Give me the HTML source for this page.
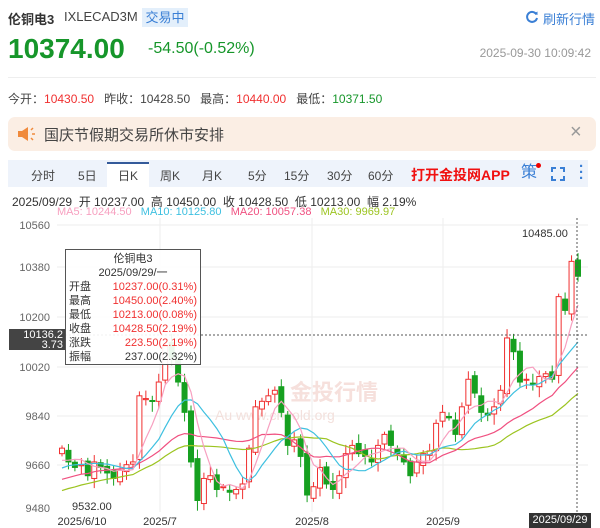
<!DOCTYPE html>
<html><head><meta charset="utf-8">
<style>
*{margin:0;padding:0;box-sizing:border-box}
body{width:600px;height:528px;overflow:hidden;background:#fff;font-family:"Liberation Sans","Noto Sans CJK SC",sans-serif;position:relative;color:#333}
.a{position:absolute;white-space:nowrap}
</style></head><body>
<div class="a" style="left:8px;top:9px;font-size:13px;font-weight:bold;color:#333">伦铜电3</div>
<div class="a" style="left:64px;top:9px;font-size:13px;color:#444">IXLECAD3M</div>
<div class="a" style="left:142px;top:8px;width:46px;height:19px;background:#e3effb;color:#3a7fd5;font-size:13px;line-height:19px;text-align:center">交易中</div>
<svg class="a" style="left:525px;top:10px" width="14" height="14" viewBox="0 0 14 14"><path d="M11.5 4.5A5 5 0 1 0 12 8" fill="none" stroke="#3a7fd5" stroke-width="2"/><path d="M9 3.5L12.5 5 12.5 1.5z" fill="#3a7fd5"/></svg>
<div class="a" style="left:543px;top:9px;font-size:13px;color:#3a7fd5">刷新行情</div>
<div class="a" style="left:8px;top:33px;font-size:28px;font-weight:bold;color:#16962a">10374.00</div>
<div class="a" style="left:148px;top:40px;font-size:16px;color:#16962a">-54.50(-0.52%)</div>
<div class="a" style="right:9px;top:46px;font-size:12px;color:#999">2025-09-30 10:09:42</div>
<div class="a" style="left:8px;top:77px;width:588px;height:1px;background:#eee"></div>
<div class="a" style="left:8px;top:90px;font-size:12px;color:#444">今开：<span style="color:#f03030">10430.50</span>&nbsp;&nbsp;&nbsp;昨收：10428.50&nbsp;&nbsp;&nbsp;最高：<span style="color:#f03030">10440.00</span>&nbsp;&nbsp;&nbsp;最低：<span style="color:#16962a">10371.50</span></div>
<div class="a" style="left:8px;top:117px;width:588px;height:34px;background:#fbeee4;border-radius:7px"></div>
<svg class="a" style="left:16px;top:125px" width="20" height="18" viewBox="0 0 20 18"><path d="M2 6h4l6-4v14l-6-4H2z" fill="#f08a3c"/><path d="M15 5l2-2M16 9h3M15 13l2 2" stroke="#f08a3c" stroke-width="1.5"/></svg>
<div class="a" style="left:44px;top:124px;font-size:15px;color:#444">国庆节假期交易所休市安排</div>
<div class="a" style="left:570px;top:121px;font-size:20px;color:#999">×</div>
<div class="a" style="left:8px;top:160px;width:580px;height:27px;background:#eef3fb"></div>
<div class="a" style="left:107px;top:162px;width:42px;height:26px;background:#fff;border-top:2px solid #345a9a"></div>
<div class="a" style="left:0;top:167px;font-size:12px;color:#444;width:400px">
<span class="a" style="left:31px">分时</span><span class="a" style="left:78px">5日</span><span class="a" style="left:118px">日K</span><span class="a" style="left:160px">周K</span><span class="a" style="left:202px">月K</span><span class="a" style="left:248px">5分</span><span class="a" style="left:284px">15分</span><span class="a" style="left:327px">30分</span><span class="a" style="left:368px">60分</span></div>
<div class="a" style="left:411px;top:165px;font-size:14px;font-weight:bold;color:#f01010">打开金投网APP</div>
<div class="a" style="left:521px;top:164px;font-size:16px;line-height:18px;color:#3a7fd5">策</div>
<div class="a" style="left:536px;top:163px;width:5px;height:5px;border-radius:50%;background:#e00"></div>
<svg class="a" style="left:551px;top:167px" width="14" height="14" viewBox="0 0 14 14"><path d="M1 5V1h4M9 1h4v4M13 9v4H9M5 13H1V9" fill="none" stroke="#3a7fd5" stroke-width="2"/></svg>
<div class="a" style="left:579px;top:164px;font-size:15px;color:#3a7fd5;line-height:6px;font-weight:bold">·<br>·<br>·</div>
<div class="a" style="left:12px;top:193px;font-size:12px;color:#333">2025/09/29&nbsp; 开 10237.00&nbsp; 高 10450.00&nbsp; 收 10428.50&nbsp; 低 10213.00&nbsp; 幅 2.19%</div>
<div class="a" style="left:57px;top:206px;font-size:11px"><span style="color:#f7a0c0">MA5: 10244.50</span>&nbsp;&nbsp;&nbsp;<span style="color:#3ec0e0">MA10: 10125.80</span>&nbsp;&nbsp;&nbsp;<span style="color:#f05080">MA20: 10057.38</span>&nbsp;&nbsp;&nbsp;<span style="color:#9cc420">MA30: 9969.97</span></div>
<svg id="ch" class="a" style="left:0;top:0" width="600" height="528"></svg>
<div class="a" style="left:65px;top:249px;width:136px;height:116px;border:1px solid #555;background:rgba(255,255,255,.92);font-size:11px;line-height:14px;padding:2px 3px">
<div style="text-align:center">伦铜电3</div><div style="text-align:center">2025/09/29/一</div>
<div>开盘<span style="float:right;color:#f03030">10237.00(0.31%)</span></div>
<div>最高<span style="float:right;color:#f03030">10450.00(2.40%)</span></div>
<div>最低<span style="float:right;color:#f03030">10213.00(0.08%)</span></div>
<div>收盘<span style="float:right;color:#f03030">10428.50(2.19%)</span></div>
<div>涨跌<span style="float:right;color:#f03030">223.50(2.19%)</span></div>
<div>振幅<span style="float:right">237.00(2.32%)</span></div></div>
<div class="a" style="left:9px;top:329px;width:56px;height:21px;background:#444;color:#fff;font-size:11px;line-height:10px;text-align:right;padding:1px 2px">10136.2<br>3.73</div>
<div class="a" style="left:529px;top:513px;width:62px;height:15px;background:#333;color:#fff;font-size:11px;line-height:15px;text-align:center">2025/09/29</div>
<script>
var s='',c=[9750,9700,9680,9690,9650,9700,9680,9660,9640,9670,9690,9700,9940,9930,9920,9990,10120,10080,9990,9880,9700,9560,9640,9650,9600,9610,9590,9600,9620,9750,9900,9920,9940,9960,9880,9760,9780,9720,9580,9610,9680,9620,9600,9650,9730,9760,9730,9720,9700,9760,9800,9760,9730,9700,9650,9700,9730,9740,9840,9880,9860,9800,9900,10000,9950,9880,9870,9900,9960,10150,10100,9990,10000,9980,10010,10020,10000,10300,10250,10428,10374];
function Y(p){return 225+(10560-p)*0.2755}
function X(i){return 62+i*6.45}
[225,267,317,367,416,465].forEach(function(y){s+='<line x1="57" x2="588" y1="'+y+'" y2="'+y+'" stroke="#eee"/>'});
[160,312,443].forEach(function(x){s+='<line x1="'+x+'" x2="'+x+'" y1="218" y2="512" stroke="#eee"/>'});
var L=[['10560',225],['10380',267],['10200',317],['10020',367],['9840',416],['9660',465],['9480',508]];
L.forEach(function(l){s+='<text x="50" y="'+(l[1]+4)+'" text-anchor="end" font-size="11" fill="#666">'+l[0]+'</text>'});
s+='<text x="290" y="400" font-size="22" fill="#f6e0dc" font-weight="bold">金投行情</text><text x="215" y="420" font-size="14" fill="#f3e0dc">Au  www.cngold.org</text>';
var h=[];for(var i=0;i<30;i++)h.push(9450+i*8+(i%3)*20);var all=h.concat(c);
function ma(n,col){var d='';for(var i=0;i<c.length;i++){var j=i+30,t=0;for(var k=0;k<n;k++)t+=all[j-k];d+=(i?'L':'M')+X(i).toFixed(1)+' '+Y(t/n).toFixed(1)}s+='<path d="'+d+'" fill="none" stroke="'+col+'" stroke-width="1.2"/>'}
for(var i=0;i<c.length;i++){var o=i?c[i-1]+((i*37)%30-15):9730,cl=c[i];var hi=Math.max(o,cl)+10+(i*13)%25,lo=Math.min(o,cl)-10-(i*17)%30;if(i==79){o=10237;hi=10450;lo=10213}var up=cl>=o,col=up?'#f03030':'#16a020',x=X(i);
s+='<line x1="'+x+'" x2="'+x+'" y1="'+Y(hi)+'" y2="'+Y(lo)+'" stroke="'+col+'"/>';var t=Y(Math.max(o,cl)),b=Y(Math.min(o,cl));if(b-t<1)b=t+1;
s+='<rect x="'+(x-2.5)+'" y="'+t+'" width="5" height="'+(b-t)+'" fill="'+(up?'#fff':col)+'" stroke="'+col+'"/>'}
ma(30,'#9cc420');ma(20,'#f05080');ma(10,'#3ec0e0');ma(5,'#f7a0c0');
s+='<line x1="577" x2="577" y1="218" y2="512" stroke="#555" stroke-dasharray="2,2"/><line x1="57" x2="588" y1="335" y2="335" stroke="#555" stroke-dasharray="2,2"/>';
s+='<text x="522" y="237" font-size="11" fill="#333">10485.00</text><text x="72" y="510" font-size="11" fill="#333">9532.00</text>';
[['2025/6/10',82],['2025/7',160],['2025/8',312],['2025/9',443]].forEach(function(l){s+='<text x="'+l[1]+'" y="525" text-anchor="middle" font-size="11" fill="#333">'+l[0]+'</text>'});
document.getElementById('ch').innerHTML=s;
</script>
</body></html>
